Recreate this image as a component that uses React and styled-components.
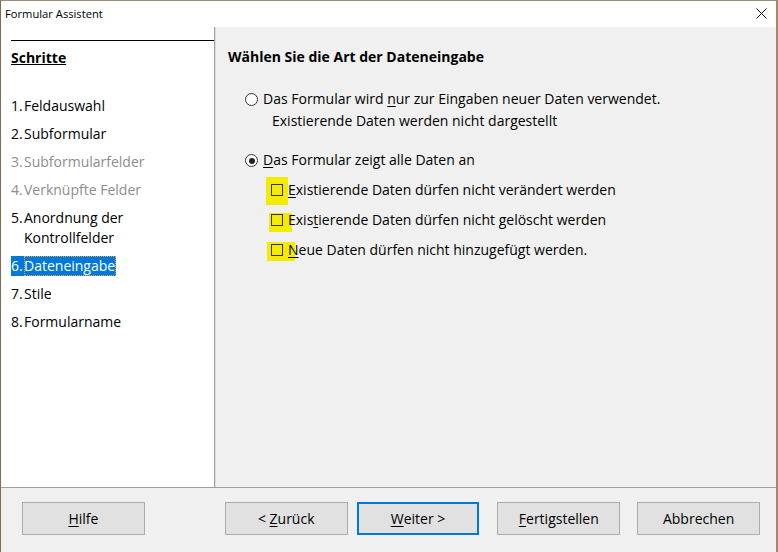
import React from "react";
import styled, { createGlobalStyle } from "styled-components";

const GlobalStyle = createGlobalStyle`
  html, body {
    margin: 0;
    padding: 0;
    background: #ffffff;
  }
  body {
    font-family: "Open Sans", "Noto Sans", "Liberation Sans", sans-serif;
    font-size: 14px;
    color: #000;
  }
`;

const Window = styled.div`
  width: 778px;
  height: 552px;
  box-sizing: border-box;
  display: flex;
  flex-direction: column;
  border-top: 1px solid #9c8a74;
  border-left: 1px solid #7d6b58;
  border-right: 2px solid #a9865e;
  background: #f0f0f0;
  overflow: hidden;
`;

const TitleBar = styled.div`
  height: 26px;
  flex: none;
  display: flex;
  align-items: center;
  justify-content: space-between;
  padding: 0 9px 2px 4px;
  box-sizing: border-box;
  background: #ffffff;
  font-size: 11.2px;
`;

const CloseButton = styled.button`
  border: none;
  background: none;
  padding: 0;
  width: 12px;
  height: 12px;
  display: flex;
  align-items: center;
  justify-content: center;
`;

const Body = styled.div`
  flex: none;
  height: 460px;
  display: flex;
`;

const Sidebar = styled.div`
  width: 214px;
  flex: none;
  box-sizing: border-box;
  background: #ffffff;
  padding: 13px 0 0 10px;
  border-right: 1px solid #a0a0a0;
`;

const SidebarRule = styled.div`
  height: 1px;
  background: #000;
`;

const SidebarTitle = styled.div`
  margin-top: 7px;
  line-height: 20px;
  font-weight: 700;
  text-decoration: underline;
`;

const StepList = styled.ol`
  list-style: none;
  margin: 28px 0 0;
  padding: 0;
  display: flex;
  flex-direction: column;
  gap: 8px;
`;

const Step = styled.li`
  display: flex;
`;

const StepInner = styled.span`
  display: inline-flex;
  line-height: 20px;
  color: ${(p) => (p.$disabled ? "#8d8d8d" : p.$active ? "#ffffff" : "#000")};
  background: ${(p) => (p.$active ? "#0078d7" : "transparent")};
`;

const StepNum = styled.span`
  width: 13px;
  flex: none;
`;

const StepLabel = styled.span`
  outline: ${(p) => (p.$focus ? "1px dotted #f0a040" : "none")};
  outline-offset: -1px;
  padding-right: ${(p) => (p.$focus ? "1px" : "0")};
`;

const Main = styled.div`
  flex: 1;
  border-left: 1px solid #dcdcdc;
  padding: 20px 0 0 12px;
`;

const Heading = styled.div`
  line-height: 20px;
  font-weight: 700;
`;

const OptionGroup = styled.div`
  margin-top: 21px;
  padding-left: 17px;
  display: flex;
  flex-direction: column;
`;

const Option = styled.label`
  display: flex;
  align-items: flex-start;
  gap: 5px;
  line-height: 22px;
  margin-top: ${(p) => p.$gap || 0}px;
`;

const Radio = styled.span`
  flex: none;
  width: 11px;
  height: 11px;
  margin-top: 5px;
  border: 1px solid #333;
  border-radius: 50%;
  background: #fff;
  display: flex;
  align-items: center;
  justify-content: center;
  &::after {
    content: "";
    width: 6px;
    height: 6px;
    border-radius: 50%;
    background: ${(p) => (p.$checked ? "#222" : "transparent")};
  }
`;

const OptionText = styled.span`
  display: flex;
  flex-direction: column;
`;

const SubLine = styled.span`
  padding-left: 9px;
`;

const CheckGroup = styled.div`
  margin-top: 8px;
  padding-left: 26px;
  display: flex;
  flex-direction: column;
  gap: 8px;
`;

const CheckRow = styled.label`
  position: relative;
  isolation: isolate;
  display: flex;
  align-items: center;
  gap: 5px;
  line-height: 22px;
`;

const BoxWrap = styled.span`
  position: relative;
  width: 12px;
  height: 12px;
  flex: none;
`;

/* yellow marker stroke laid behind the box and the first letter */
const Marker = styled.span`
  position: absolute;
  z-index: -1;
  left: ${(p) => p.$x}px;
  top: ${(p) => p.$y}px;
  width: ${(p) => p.$w}px;
  height: ${(p) => p.$h}px;
  background: #f4ec00;
`;

const Box = styled.span`
  position: absolute;
  inset: 0;
  border: 1px solid #333;
`;

const Key = styled.span`
  text-decoration: underline;
  text-underline-offset: 2px;
`;

const Footer = styled.div`
  flex: 1;
  border-top: 1px solid #a0a0a0;
  display: flex;
  align-items: flex-start;
  padding: 14px 16px 0 21px;
`;

const Button = styled.button`
  width: 123px;
  height: 33px;
  margin-left: ${(p) => p.$offset || 0}px;
  box-sizing: border-box;
  background: #e1e1e1;
  border: ${(p) => (p.$default ? "2px solid #0078d7" : "1px solid #adadad")};
  font-family: inherit;
  font-size: 14px;
  color: #000;
  padding: 0;
`;

const steps = [
  { n: "1.", label: "Feldauswahl" },
  { n: "2.", label: "Subformular" },
  { n: "3.", label: "Subformularfelder", disabled: true },
  { n: "4.", label: "Verknüpfte Felder", disabled: true },
  { n: "5.", label: <>Anordnung der<br />Kontrollfelder</> },
  { n: "6.", label: "Dateneingabe", active: true },
  { n: "7.", label: "Stile" },
  { n: "8.", label: "Formularname" },
];

const checks = [
  { text: <><Key>E</Key>xistierende Daten dürfen nicht verändert werden</>, hl: { x: -5, y: -7, w: 22, h: 28 } },
  { text: <>Exis<Key>t</Key>ierende Daten dürfen nicht gelöscht werden</>, hl: { x: -2, y: -1, w: 23, h: 19 } },
  { text: <><Key>N</Key>eue Daten dürfen nicht hinzugefügt werden.</>, hl: { x: -4, y: -2, w: 28, h: 19 } },
];

export default function App() {
  return (
    <>
      <GlobalStyle />
      <Window>
        <TitleBar>
          <span>Formular Assistent</span>
          <CloseButton aria-label="Schließen">
            <svg width="11" height="11" viewBox="0 0 11 11">
              <path d="M0.5 0.5 L10.5 10.5 M10.5 0.5 L0.5 10.5" stroke="#111" strokeWidth="1" />
            </svg>
          </CloseButton>
        </TitleBar>
        <Body>
          <Sidebar>
            <SidebarRule />
            <SidebarTitle>Schritte</SidebarTitle>
            <StepList>
              {steps.map((s) => (
                <Step key={s.n}>
                  <StepInner $disabled={s.disabled} $active={s.active}>
                    <StepNum>{s.n}</StepNum>
                    <StepLabel $focus={s.active}>{s.label}</StepLabel>
                  </StepInner>
                </Step>
              ))}
            </StepList>
          </Sidebar>
          <Main>
            <Heading>Wählen Sie die Art der Dateneingabe</Heading>
            <OptionGroup>
              <Option>
                <Radio />
                <OptionText>
                  <span>Das Formular wird <Key>n</Key>ur zur Eingaben neuer Daten verwendet.</span>
                  <SubLine>Existierende Daten werden nicht dargestellt</SubLine>
                </OptionText>
              </Option>
              <Option $gap={17}>
                <Radio $checked />
                <OptionText>
                  <span><Key>D</Key>as Formular zeigt alle Daten an</span>
                </OptionText>
              </Option>
              <CheckGroup>
                {checks.map((c, i) => (
                  <CheckRow key={i}>
                    <BoxWrap>
                      <Marker $x={c.hl.x} $y={c.hl.y} $w={c.hl.w} $h={c.hl.h} />
                      <Box />
                    </BoxWrap>
                    <span>{c.text}</span>
                  </CheckRow>
                ))}
              </CheckGroup>
            </OptionGroup>
          </Main>
        </Body>
        <Footer>
          <Button><Key>H</Key>ilfe</Button>
          <Button $offset={80}>&lt; <Key>Z</Key>urück</Button>
          <Button $offset={9} $default><Key>W</Key>eiter &gt;</Button>
          <Button $offset={18}><Key>F</Key>ertigstellen</Button>
          <Button $offset={17}>Abbrechen</Button>
        </Footer>
      </Window>
    </>
  );
}
